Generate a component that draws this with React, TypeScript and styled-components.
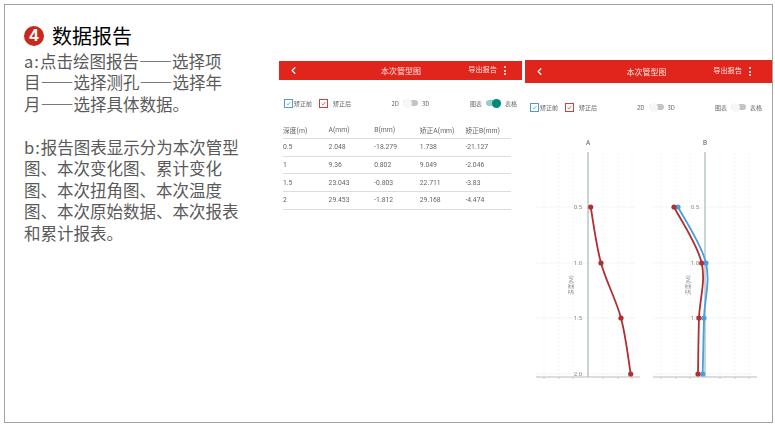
import React from "react";
import styled, { createGlobalStyle } from "styled-components";
import { ChevronLeft } from "lucide-react";

const CJK = `"Noto Sans CJK SC", "Noto Sans", sans-serif`;
const LATIN = `Roboto, "Noto Sans CJK SC", sans-serif`;

const GlobalStyle = createGlobalStyle`
  html, body { margin: 0; background: #fff; }
  body { font-family: ${CJK}; }
`;

const Frame = styled.div`
  box-sizing: border-box;
  display: flex;
  width: 769px;
  height: 419px;
  margin: 4px 0 0 4px;
  border: 1px solid #a3a3a3;
  overflow: hidden;
`;

const Intro = styled.section`
  box-sizing: border-box;
  flex: 0 0 274px;
  padding: 20px 0 0 19px;
`;

const TitleRow = styled.div`
  display: flex;
  align-items: center;
  gap: 8px;
  height: 22px;
  margin-bottom: 4px;
`;

const Badge = styled.span`
  display: flex;
  align-items: center;
  justify-content: center;
  width: 20px;
  height: 20px;
  border-radius: 50%;
  background: #c9281f;
  color: #fff;
  font: 700 17px "Liberation Sans", sans-serif;
`;

const Title = styled.h1`
  margin: 0;
  font-size: 20px;
  font-weight: 400;
  line-height: 22px;
  color: #000;
`;

const Paragraph = styled.p<{ $gap?: number }>`
  margin: ${(p) => p.$gap ?? 0}px 0 0;
  font-size: 16.5px;
  line-height: 21.45px;
  font-weight: 400;
  color: #5a5a5a;
  white-space: pre;
  text-spacing-trim: space-all;
`;

// the font's em dash is narrower than a full cell, this asks for the full-width form
const Dashes = styled.span`
  font-feature-settings: "fwid";
`;

const Prefix = styled.span`
  letter-spacing: 1px;
`;

const Phone = styled.section<{ $top: number; $width: number; $blur: number }>`
  flex: 0 0 ${(p) => p.$width}px;
  margin-top: ${(p) => p.$top}px;
  margin-right: 3px;
  filter: blur(${(p) => p.$blur}px);
  &:last-child { margin-right: 0; }
`;

const Header = styled.header<{ $height: number; $right: number; $left: number }>`
  box-sizing: border-box;
  display: grid;
  grid-template-columns: 1fr auto 1fr;
  align-items: center;
  height: ${(p) => p.$height}px;
  padding: 0 ${(p) => p.$right}px 0 ${(p) => p.$left}px;
  background: #e0261c;
  color: #fff;
`;

const HeaderTitle = styled.div`
  padding-left: 8px;
  font-size: 8px;
  color: #fbe4e2;
`;

const HeaderActions = styled.div`
  display: flex;
  justify-content: flex-end;
  align-items: center;
  gap: 7px;
`;

const ExportLabel = styled.span`
  font-size: 7.2px;
  padding-bottom: 3px;
  color: #fbe4e2;
`;

const Dots = styled.span`
  display: flex;
  flex-direction: column;
  gap: 1.6px;
  & > i {
    width: 2px;
    height: 2px;
    border-radius: 50%;
    background: #fff;
  }
`;

const Controls = styled.div<{ $top: number; $right: number }>`
  display: flex;
  justify-content: space-between;
  align-items: center;
  height: 12px;
  margin-top: ${(p) => p.$top}px;
  padding: 0 ${(p) => p.$right}px 0 5px;
`;

const Group = styled.div`
  display: flex;
  align-items: center;
  font-size: 6px;
  color: #666;
`;

const Check = styled.span<{ $color: string; $after: number }>`
  box-sizing: border-box;
  display: flex;
  align-items: center;
  justify-content: center;
  width: 9px;
  height: 9px;
  margin-right: ${(p) => p.$after}px;
  border: 1px solid ${(p) => p.$color};
`;

const CheckLabel = styled.span<{ $after?: number }>`
  margin-right: ${(p) => p.$after ?? 0}px;
`;

const SwitchTrack = styled.span<{ $on?: boolean }>`
  position: relative;
  width: 15px;
  height: 6px;
  margin: 0 4px;
  border-radius: 3px;
  background: ${(p) => (p.$on ? "#8fd0c8" : "#c4c4c4")};
`;

const SwitchKnob = styled.span<{ $on?: boolean }>`
  position: absolute;
  top: -1.5px;
  left: ${(p) => (p.$on ? 6 : 0)}px;
  width: 9px;
  height: 9px;
  border-radius: 50%;
  background: ${(p) => (p.$on ? "#00897b" : "#f7f7f7")};
`;

const Table = styled.table`
  width: 228px;
  margin: 13px 0 0 4px;
  border-collapse: collapse;
  table-layout: fixed;
  font: 6.8px ${LATIN};
  color: #666;
`;

const Cell = styled.td`
  height: 16.7px;
  padding: 0;
  border-bottom: 1px solid #dcdcdc;
`;

const HeadCell = styled.th`
  height: 16px;
  padding: 0;
  border-bottom: 1px solid #dcdcdc;
  font-weight: 400;
  text-align: left;
`;

const ChartRow = styled.div`
  display: flex;
  margin-top: 23px;
  padding-left: 5px;
`;

const ChartSvg = styled.svg`
  display: block;
  flex: 0 0 118px;
  font-family: ${LATIN};
`;

type Point = [number, number];

// catmull-rom through the points so the line bends like the chart lib does
const smoothPath = (pts: Point[]) => {
  let d = `M${pts[0][0]} ${pts[0][1]}`;
  for (let i = 0; i < pts.length - 1; i++) {
    const p0 = pts[i - 1] ?? pts[i];
    const p1 = pts[i];
    const p2 = pts[i + 1];
    const p3 = pts[i + 2] ?? p2;
    const c1x = p1[0] + (p2[0] - p0[0]) / 6;
    const c1y = p1[1] + (p2[1] - p0[1]) / 6;
    const c2x = p2[0] - (p3[0] - p1[0]) / 6;
    const c2y = p2[1] - (p3[1] - p1[1]) / 6;
    d += ` C${c1x} ${c1y} ${c2x} ${c2y} ${p2[0]} ${p2[1]}`;
  }
  return d;
};

const ROWS_Y = [71, 127, 182, 238];
const GRID_OFFSETS = [-44, -29, -15, 15, 30, 44];

interface ChartProps {
  name: string;
  axisX: number;
  labels: string[];
  series: { color: string; xs: number[] }[];
}

const Chart: React.FC<ChartProps> = ({ name, axisX, labels, series }) => (
  <ChartSvg width={118} height={250} viewBox="0 0 118 250">
    {GRID_OFFSETS.map((o) => (
      <line key={o} x1={axisX + o} x2={axisX + o} y1={17} y2={241} stroke="#eef0f2" strokeWidth={0.7} strokeDasharray="2 2" />
    ))}
    {ROWS_Y.map((y) => (
      <line key={y} x1={axisX - 52} x2={axisX + 48} y1={y} y2={y} stroke="#f0f0f0" strokeWidth={0.7} />
    ))}
    <line x1={axisX} x2={axisX} y1={16} y2={241} stroke="#b9c4c8" strokeWidth={1.5} />
    <line x1={axisX - 52} x2={axisX + 52} y1={241} y2={241} stroke="#b5b9bb" strokeWidth={1} />
    {GRID_OFFSETS.map((o) => (
      <line key={o} x1={axisX + o} x2={axisX + o} y1={241} y2={243} stroke="#b5b9bb" strokeWidth={0.7} />
    ))}
    <text x={axisX} y={9} fontSize={6.5} fill="#555" textAnchor="middle">{name}</text>
    {labels.map((l, i) => (
      <text key={l} x={axisX - 6} y={ROWS_Y[i] + 2} fontSize={6} fill="#8a8a8a" textAnchor="end">{l}</text>
    ))}
    <text x={axisX - 15} y={149} fontSize={5.5} fill="#8a8a8a" textAnchor="middle" transform={`rotate(-90 ${axisX - 15} 149)`}>
      深度(M)
    </text>
    {series.map((s) => (
      <g key={s.color}>
        <path d={smoothPath(s.xs.map((x, i): Point => [x, ROWS_Y[i]]))} fill="none" stroke={s.color} strokeWidth={1.8} />
        {s.xs.map((x, i) => (
          <circle key={i} cx={x} cy={ROWS_Y[i]} r={2.6} fill={s.color} />
        ))}
      </g>
    ))}
  </ChartSvg>
);

const TickMark: React.FC<{ color: string }> = ({ color }) => (
  <svg width="5" height="5" viewBox="0 0 5 5">
    <path d="M0.7 2.6 L2 3.9 L4.3 1.1" fill="none" stroke={color} strokeWidth="0.8" />
  </svg>
);

const ControlBar: React.FC<{ top: number; right: number; tableOn?: boolean }> = ({ top, right, tableOn }) => (
  <Controls $top={top} $right={right}>
    <Group>
      <Check $color="#4f9fc4" $after={1}><TickMark color="#4f9fc4" /></Check>
      <CheckLabel $after={7}>矫正前</CheckLabel>
      <Check $color="#c8423e" $after={5}><TickMark color="#c8423e" /></Check>
      <CheckLabel>矫正后</CheckLabel>
    </Group>
    <Group>
      2D
      <SwitchTrack><SwitchKnob /></SwitchTrack>
      3D
    </Group>
    <Group>
      图表
      <SwitchTrack $on={tableOn}><SwitchKnob $on={tableOn} /></SwitchTrack>
      表格
    </Group>
  </Controls>
);

const AppBar: React.FC<{ height: number; left: number; right: number }> = ({ height, left, right }) => (
  <Header $height={height} $left={left} $right={right}>
    <ChevronLeft size={11} strokeWidth={2.6} />
    <HeaderTitle>本次管型图</HeaderTitle>
    <HeaderActions>
      <ExportLabel>导出报告</ExportLabel>
      <Dots><i /><i /><i /></Dots>
    </HeaderActions>
  </Header>
);

const COLUMNS = ["深度(m)", "A(mm)", "B(mm)", "矫正A(mm)", "矫正B(mm)"];
const ROWS = [
  ["0.5", "2.048", "-18.279", "1.738", "-21.127"],
  ["1", "9.36", "0.802", "9.049", "-2.046"],
  ["1.5", "23.043", "-0.803", "22.711", "-3.83"],
  ["2", "29.453", "-1.812", "29.168", "-4.474"],
];

const STEP_B = [
  "报告图表显示分为本次管型",
  "图、本次变化图、累计变化",
  "图、本次扭角图、本次温度",
  "图、本次原始数据、本次报表",
  "和累计报表。",
].join("\n");

const App: React.FC = () => (
  <>
    <GlobalStyle />
    <Frame>
      <Intro>
        <TitleRow>
          <Badge>4</Badge>
          <Title>数据报告</Title>
        </TitleRow>
        <Paragraph>
          <Prefix>a:</Prefix>点击绘图报告<Dashes>——</Dashes>选择项{"\n"}
          目<Dashes>——</Dashes>选择测孔<Dashes>——</Dashes>选择年{"\n"}
          月<Dashes>——</Dashes>选择具体数据。
        </Paragraph>
        <Paragraph $gap={21.45}><Prefix>b:</Prefix>{STEP_B}</Paragraph>
      </Intro>

      <Phone $top={56} $width={243} $blur={0.4}>
        <AppBar height={19} left={9} right={16} />
        <ControlBar top={17} right={5} tableOn />
        <Table>
          <thead>
            <tr>{COLUMNS.map((c) => <HeadCell key={c}>{c}</HeadCell>)}</tr>
          </thead>
          <tbody>
            {ROWS.map((r) => (
              <tr key={r[0]}>{r.map((v, i) => <Cell key={i}>{v}</Cell>)}</tr>
            ))}
          </tbody>
        </Table>
      </Phone>

      <Phone $top={55} $width={247} $blur={0.5}>
        <AppBar height={23} left={9} right={21} />
        <ControlBar top={18} right={10} />
        <ChartRow>
          <Chart
            name="A"
            axisX={58}
            labels={["0.5", "1.0", "1.5", "2.0"]}
            series={[{ color: "#b02f33", xs: [60.7, 71, 91, 100.7] }]}
          />
          <Chart
            name="B"
            axisX={57}
            labels={["0.5", "1.0", "1.5", "2"]}
            series={[
              { color: "#4a9fe0", xs: [30, 58, 56, 54.7] },
              { color: "#b02f33", xs: [26, 53.7, 51, 50] },
            ]}
          />
        </ChartRow>
      </Phone>
    </Frame>
  </>
);

export default App;
